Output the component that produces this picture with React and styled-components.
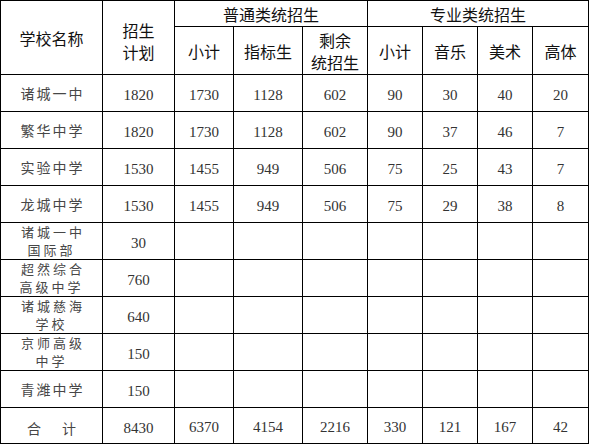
import React from "react"
import styled, { createGlobalStyle } from "styled-components"

const GlobalStyle = createGlobalStyle`
  body {
    margin: 0;
    background: #ffffff;
  }
`

const schools = [
  { name: ["诸城一中"], plan: 1820, nums: [1730, 1128, 602, 90, 30, 40, 20] },
  { name: ["繁华中学"], plan: 1820, nums: [1730, 1128, 602, 90, 37, 46, 7] },
  { name: ["实验中学"], plan: 1530, nums: [1455, 949, 506, 75, 25, 43, 7] },
  { name: ["龙城中学"], plan: 1530, nums: [1455, 949, 506, 75, 29, 38, 8] },
  { name: ["诸城一中", "国际部"], plan: 30 },
  { name: ["超然综合", "高级中学"], plan: 760 },
  { name: ["诸城慈海", "学校"], plan: 640 },
  { name: ["京师高级", "中学"], plan: 150 },
  { name: ["青潍中学"], plan: 150 },
]

const total = { plan: 8430, nums: [6370, 4154, 2216, 330, 121, 167, 42] }

const widths = [102, 72, 59, 69, 65, 55, 55, 55, 56]

const App = () => {
  return (
    <>
      <GlobalStyle />
      <Table>
        <colgroup>
          {widths.map((w, i) => (
            <col key={i} style={{ width: w }} />
          ))}
        </colgroup>
        <thead>
          <HeadRow $h={26}>
            <HeadCell rowSpan={2}>学校名称</HeadCell>
            <HeadCell rowSpan={2} $pad={6}>
              招生
              <br />
              计划
            </HeadCell>
            <HeadCell colSpan={3}>普通类统招生</HeadCell>
            <HeadCell colSpan={4}>专业类统招生</HeadCell>
          </HeadRow>
          <HeadRow $h={48}>
            <HeadCell>小计</HeadCell>
            <HeadCell>指标生</HeadCell>
            <HeadCell>
              剩余
              <br />
              统招生
            </HeadCell>
            <HeadCell>小计</HeadCell>
            <HeadCell>音乐</HeadCell>
            <HeadCell>美术</HeadCell>
            <HeadCell>高体</HeadCell>
          </HeadRow>
        </thead>
        <tbody>
          {schools.map((s, i) => (
            <BodyRow key={i}>
              <NameCell $two={s.name.length > 1}>
                {s.name[0]}
                {s.name[1] && (
                  <>
                    <br />
                    {s.name[1]}
                  </>
                )}
              </NameCell>
              <NumCell>{s.plan}</NumCell>
              {Array.from({ length: 7 }).map((_, k) => (
                <NumCell key={k}>{s.nums ? s.nums[k] : ""}</NumCell>
              ))}
            </BodyRow>
          ))}
          <BodyRow $last>
            <NameCell $total>合计</NameCell>
            <NumCell $total>{total.plan}</NumCell>
            {total.nums.map((n, k) => (
              <NumCell key={k}>{n}</NumCell>
            ))}
          </BodyRow>
        </tbody>
      </Table>
    </>
  )
}
export default App

// tabla general
const Table = styled.table`
  border-collapse: collapse;
  table-layout: fixed;
  width: 589px;
  background: #ffffff;

  td,
  th {
    border: 1px solid #000000;
    padding: 0;
    text-align: center;
  }
`
const HeadRow = styled.tr`
  height: ${(p) => p.$h}px;
`
const HeadCell = styled.th`
  font-family: "Noto Sans CJK SC", "Noto Sans", sans-serif;
  font-weight: normal;
  font-size: 16px;
  line-height: 22px;
  color: #111111;
  padding-top: ${(p) => p.$pad || 0}px !important;
`
const BodyRow = styled.tr`
  height: ${(p) => (p.$last ? 36 : 37)}px;
`
const NameCell = styled.td`
  font-family: "Noto Sans CJK SC", sans-serif;
  font-size: ${(p) => (p.$two ? 13 : 14)}px;
  line-height: ${(p) => (p.$two ? "18px" : "20px")};
  letter-spacing: ${(p) => (p.$total ? "21px" : p.$two ? "3px" : "2px")};
  color: #474747;
  white-space: nowrap;
  padding-top: ${(p) => (p.$total ? 5 : 0)}px !important;
  text-indent: ${(p) => (p.$total ? "21px" : p.$two ? "3px" : "2px")};
`
const NumCell = styled.td`
  font-family: "Liberation Serif", "Times New Roman", serif;
  font-size: 15px;
  color: #333333;
  padding-top: ${(p) => (p.$total ? 6 : 4)}px !important;
`
